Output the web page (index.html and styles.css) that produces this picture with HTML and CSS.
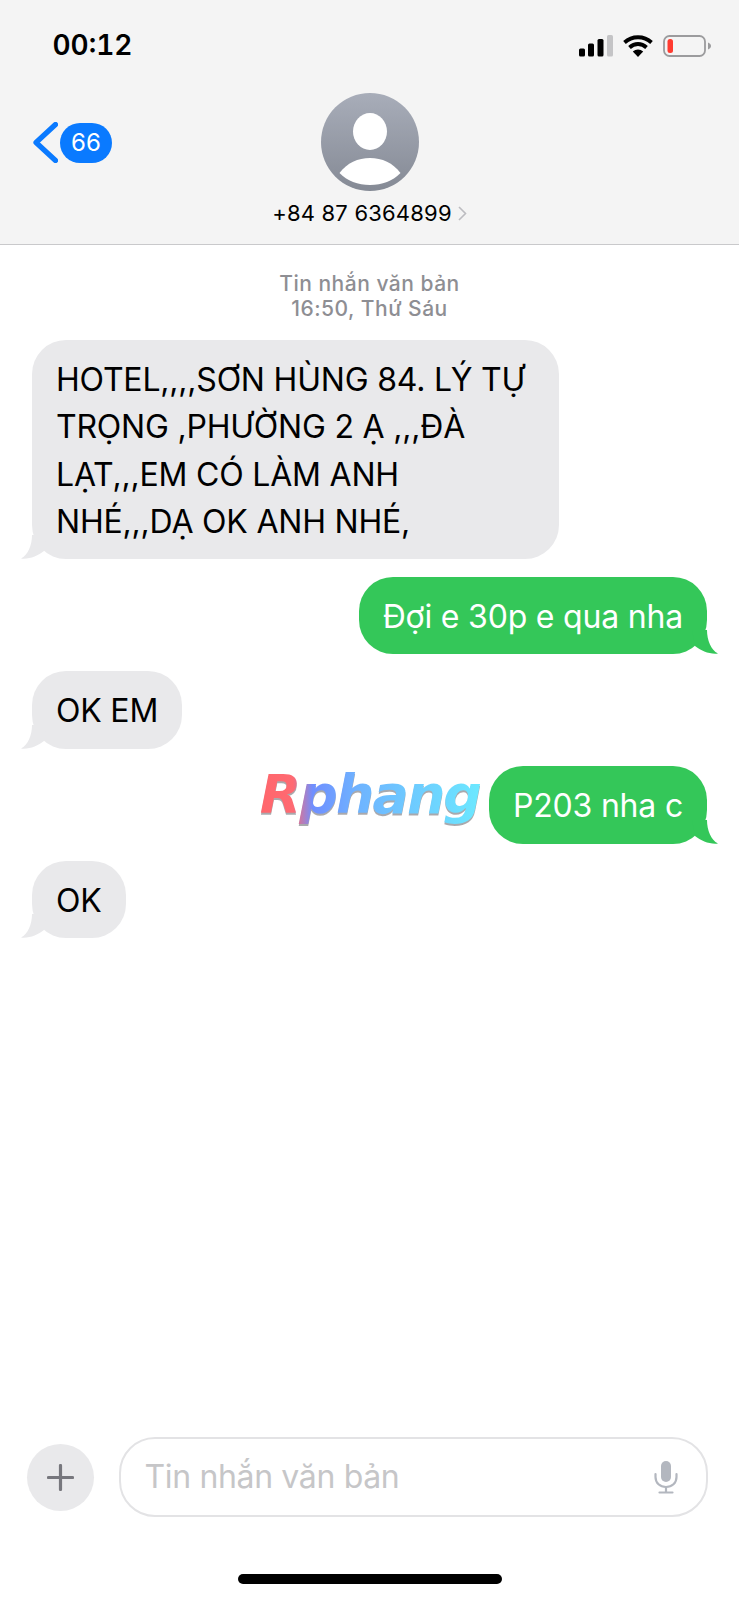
FILE: index.html
```html
<!DOCTYPE html>
<html lang="vi">
<head>
<meta charset="utf-8">
<title>Tin nhắn</title>
<link rel="stylesheet" href="styles.css">
</head>
<body>
<div class="screen">
  <header class="header">
    <div class="status">
      <span class="clock">00:12</span>
      <div class="status-icons">
        <svg class="signal" width="34" height="22" viewBox="0 0 34 22"><rect x="0" y="13.5" width="6" height="8" rx="1.5" fill="#000"/><rect x="9" y="8.5" width="6" height="13" rx="1.5" fill="#000"/><rect x="18.500" y="4" width="6" height="17.500" rx="1.500" fill="#000"/><rect x="28" y="0" width="6" height="21.500" rx="1.500" fill="#c4c4c6"/></svg>
        <svg class="wifi" width="30" height="22" viewBox="0 0 30 22"><path d="M1.500 7.500C9 .5 21 .5 28.500 7.500" fill="none" stroke="#000" stroke-width="3.800"/><path d="M6.500 12.500C11.500 7.800 18.500 7.800 23.500 12.500" fill="none" stroke="#000" stroke-width="3.800"/><path d="M15 22L9.800 16.500C12.800 13.800 17.200 13.800 20.200 16.500Z" fill="#000"/></svg>
        <svg class="battery" width="48" height="22" viewBox="0 0 48 22"><rect x="1" y="1" width="41" height="20" rx="5.500" fill="none" stroke="#9b9b9d" stroke-width="1.800"/><rect x="4.500" y="4" width="5.500" height="14" rx="2.500" fill="#ff3b30"/><path d="M45 7.500C47 8.200 48 9.500 48 11C48 12.500 47 13.800 45 14.500Z" fill="#9b9b9d"/></svg>
      </div>
    </div>
    <div class="nav">
      <div class="back">
        <svg class="chevron" width="25" height="41" viewBox="0 0 25 41"><path d="M22.500 2.500L3 20.500L22.500 38.500" fill="none" stroke="#0a7aff" stroke-width="5.200" stroke-linecap="round" stroke-linejoin="round"/></svg>
        <span class="badge">66</span>
      </div>
      <div class="contact">
        <svg class="avatar" width="98" height="98" viewBox="0 0 98 98">
          <defs>
            <linearGradient id="ava" x1="0" y1="0" x2="0" y2="1"><stop offset="0" stop-color="#a8adb9"/><stop offset="1" stop-color="#858a95"/></linearGradient>
          </defs>
          <circle cx="49" cy="49" r="49" fill="url(#ava)"/>
          <ellipse cx="49" cy="38.500" rx="17" ry="18.500" fill="#fff"/>
          <path d="M18.500 80C26 70 37 65 49 65C61 65 72 70 79.500 80C72 88 61 92 49 92C37 92 26 88 18.500 80Z" fill="#fff"/>
        </svg>
        <div class="number-row">
          <span class="number">+84 87 6364899</span>
          <svg class="disclosure" width="9" height="15" viewBox="0 0 9 15"><path d="M1 1L7.500 7.500L1 14" fill="none" stroke="#bcbcc0" stroke-width="1.600"/></svg>
        </div>
      </div>
      <div class="nav-spacer"></div>
    </div>
  </header>

  <main class="thread">
    <div class="stamp">Tin nhắn văn bản<br>16:50, Thứ Sáu</div>

    <div class="bubble in wide">HOTEL,,,,SƠN HÙNG 84. LÝ TỰ TRỌNG ,PHƯỜNG 2 Ạ ,,,ĐÀ LẠT,,,EM CÓ LÀM ANH NHÉ,,,DẠ OK ANH NHÉ,
      <svg class="tail" width="24" height="30" viewBox="0 0 24 30"><path d="M11 6C11 16 7 26 0 29.500C8 30.500 17 27 23 22L26 6Z"/></svg>
    </div>
    <div class="bubble out">Đợi e 30p e qua nha
      <svg class="tail" width="24" height="30" viewBox="0 0 24 30"><path d="M11 6C11 16 7 26 0 29.500C8 30.500 17 27 23 22L26 6Z"/></svg>
    </div>
    <div class="bubble in">OK EM
      <svg class="tail" width="24" height="30" viewBox="0 0 24 30"><path d="M11 6C11 16 7 26 0 29.500C8 30.500 17 27 23 22L26 6Z"/></svg>
    </div>
    <div class="bubble out marked">P203 nha c
      <span class="watermark">Rphang</span>
      <svg class="tail" width="24" height="30" viewBox="0 0 24 30"><path d="M11 6C11 16 7 26 0 29.500C8 30.500 17 27 23 22L26 6Z"/></svg>
    </div>
    <div class="bubble in">OK
      <svg class="tail" width="24" height="30" viewBox="0 0 24 30"><path d="M11 6C11 16 7 26 0 29.500C8 30.500 17 27 23 22L26 6Z"/></svg>
    </div>
  </main>

  <footer class="composer">
    <div class="plus">
      <svg width="27" height="27" viewBox="0 0 27 27"><path d="M13.500 1.500V25.500M1.500 13.500H25.500" stroke="#77777d" stroke-width="3.200" stroke-linecap="round"/></svg>
    </div>
    <div class="field">
      <span class="placeholder">Tin nhắn văn bản</span>
      <svg class="mic" width="24" height="33" viewBox="0 0 24 33"><rect x="7" y="0" width="10" height="21" rx="5" fill="#b3b7bf"/><path d="M1.500 13V16C1.500 22 6 26 12 26C18 26 22.500 22 22.500 16V13" fill="none" stroke="#b3b7bf" stroke-width="2.200" stroke-linecap="round"/><path d="M12 26V31M5.500 31.500H18.500" stroke="#b3b7bf" stroke-width="2.200" stroke-linecap="round"/></svg>
    </div>
  </footer>
  <div class="home-wrap"><div class="home"></div></div>
</div>
</body>
</html>
```

FILE: styles.css
```css
* { box-sizing: border-box; }
html, body { margin: 0; padding: 0; background: #fff; }
body { font-family: Inter, "Noto Sans", sans-serif; color: #000; }

.screen { width: 739px; height: 1600px; display: flex; flex-direction: column; overflow: hidden; }

.header { background: #f4f4f4; border-bottom: 1px solid #c9c9cb; height: 245px; flex: none; }

.status { height: 93px; display: flex; justify-content: space-between; align-items: flex-start; padding: 29px 28px 0 52.500px; }
.clock { font-size: 28px; line-height: 32px; font-weight: 600; font-variant-numeric: tabular-nums; letter-spacing: 0; }
.status-icons { display: flex; align-items: flex-start; padding-top: 6px; }
.signal { margin-right: 10px; }
.wifi { margin-right: 10px; }

.nav { display: grid; grid-template-columns: 1fr auto 1fr; align-items: start; }
.back { display: flex; align-items: center; padding: 29px 0 0 33px; }
.chevron { margin-right: 2px; }
.badge { width: 52px; height: 40px; border-radius: 20px; background: #0a7aff; color: #fff; font-size: 24px; line-height: 40px; text-align: center; }

.contact { display: flex; flex-direction: column; align-items: center; }
.avatar { display: block; margin-left: 2px; }
.number-row { display: flex; align-items: center; margin-top: 9px; height: 26px; }
.number { font-size: 22px; line-height: 26px; white-space: nowrap; letter-spacing: 0.2px; }
.disclosure { margin-left: 6px; }

.thread { flex: 1; position: relative; display: flex; flex-direction: column; align-items: flex-start; gap: 17.500px; padding: 26px 32px 0; }
.stamp { width: 100%; text-align: center; color: #8e8e93; font-size: 21px; line-height: 25px; font-weight: 500; letter-spacing: 0.5px; margin-bottom: 1.500px; }

.bubble { position: relative; border-radius: 34px; padding: 16px 24px 14px; font-size: 32px; line-height: 47.300px; letter-spacing: -0.2px; }
.in { background: #e9e9eb; color: #000; }
.in .tail { fill: #e9e9eb; }
.out { background: #34c759; color: #fff; align-self: flex-end; }
.out .tail { fill: #34c759; }
.wide { width: 527px; }

.tail { position: absolute; bottom: 0; left: -11px; display: block; overflow: visible; }
.out .tail { left: auto; right: -11px; transform: scaleX(-1); }

.watermark {
  position: absolute; right: calc(100% + 9px); top: -4px; white-space: nowrap;
  font-family: "DejaVu Sans", sans-serif; font-weight: 700; font-style: italic; font-size: 54px; line-height: 66px; letter-spacing: -2px;
  background: linear-gradient(90deg, #ff666c 0%, #ff6a72 15%, #6f8fff 24%, #6fb4ff 45%, #6ce8ff 100%);
  -webkit-background-clip: text; background-clip: text; color: transparent;
  filter: drop-shadow(0 2px 0 #a9a9ad);
}

.composer { flex: none; display: flex; align-items: center; gap: 25px; padding: 0 31.500px 0 27px; height: 80px; }
.plus { width: 67px; height: 67px; border-radius: 50%; background: #e9e9eb; display: flex; align-items: center; justify-content: center; flex: none; }
.plus svg { display: block; }
.field { flex: 1; height: 80px; border: 2px solid #e3e3e5; border-radius: 36px; display: flex; align-items: center; justify-content: space-between; padding: 0 28px 0 23.500px; }
.placeholder { font-size: 32px; line-height: 40px; letter-spacing: -0.35px; color: #c6c6c8; }
.mic { display: block; }

.home-wrap { flex: none; height: 83px; display: flex; justify-content: center; padding-top: 57px; }
.home { width: 264px; height: 10px; border-radius: 5px; background: #000; }
```
